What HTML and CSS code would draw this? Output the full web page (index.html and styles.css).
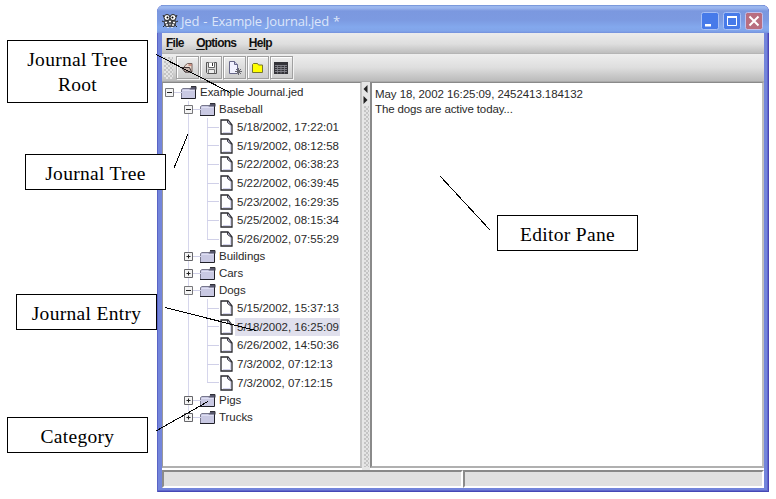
FILE: index.html
```
<!DOCTYPE html>
<html lang="en">
<head>
<meta charset="utf-8">
<title>Jed - Example Journal.jed</title>
<link rel="stylesheet" href="styles.css">
</head>
<body>
<svg class="defs" width="0" height="0">
  <defs>
    <symbol id="folder" viewBox="0 0 16 13"><path d="M1 3h13v9H1z" fill="#c9c9e3"/><path d="M.5 12V3.500L2 2.500h7.500" fill="none" stroke="#77778c"/><path d="M0 12.500H14.500V3" fill="none" stroke="#202028"/><path d="M8.500 3.500L10.500.500H15v3z" fill="#55556a"/><path d="M10 .5h5v3" fill="none" stroke="#303038"/><path d="M1.500 4.500h12" stroke="#dedef2"/></symbol>
    <symbol id="doc" viewBox="0 0 13 16"><path d="M1 1h7l4 5v9H1z" fill="#fff" stroke="#28282e" stroke-width="1.300"/><path d="M3 13.500h7.500V6.500" fill="none" stroke="#d5d5ee"/><path d="M7.500 1v2.500l4 3" fill="#c9c9e6" stroke="#38383e"/></symbol>
    <symbol id="minus" viewBox="0 0 9 9"><path d="M.5.5h8v8h-8z" fill="#f4f4f4" stroke="#77777a"/><path d="M2 4.500h5" stroke="#222"/></symbol>
    <symbol id="plus" viewBox="0 0 9 9"><path d="M.5.5h8v8h-8z" fill="#f4f4f4" stroke="#66666a"/><path d="M2.500 4.500h4M4.500 2.500v4" stroke="#222"/></symbol>
  </defs>
</svg>

<main class="window">
  <header class="titlebar">
    <svg class="app-icon" width="16" height="16" viewBox="0 0 16 16"><path d="M2 4l-1-2M14 4l1-2M2 9L0 8M14 9l2-1M3 12l-2 2M13 12l2 2" stroke="#222"/><rect x="2" y="6" width="12" height="8" rx="3" fill="#44464c"/><circle cx="5" cy="4.500" r="3" fill="#fff" stroke="#222"/><circle cx="11" cy="4.500" r="3" fill="#fff" stroke="#222"/><circle cx="5.500" cy="4.500" r="1"/><circle cx="10.500" cy="4.500" r="1"/><path d="M3 9.500h2M7 8.500h2M11 9.500h2M4 12h2M7.500 11.500h1M10 12h2M6 14v1M10 14v1" stroke="#fff" stroke-width="1.300"/></svg>
    <h1 class="title">Jed - Example Journal.jed *</h1>
    <div class="controls">
      <svg width="18" height="18" viewBox="0 0 18 18"><rect x=".5" y=".5" width="17" height="17" rx="2" class="btn-blue"/><path d="M4 12h6v2.500H4z" fill="#fff"/></svg>
      <svg width="18" height="18" viewBox="0 0 18 18"><rect x=".5" y=".5" width="17" height="17" rx="2" class="btn-blue"/><path d="M4.500 5v8.500h9V5z" fill="none" stroke="#fff"/><path d="M4 5h10" stroke="#fff" stroke-width="2"/></svg>
      <svg width="18" height="18" viewBox="0 0 18 18"><rect x=".5" y=".5" width="17" height="17" rx="2" class="btn-red"/><path d="M4.500 4.500l9 9m0-9l-9 9" stroke="#fff" stroke-width="2"/></svg>
    </div>
  </header>
  <nav class="menubar"><span><u>F</u>ile</span><span><u>O</u>ptions</span><span><u>H</u>elp</span></nav>
  <div class="toolbar">
    <i class="grip"></i>
    <button class="tool"><svg width="16" height="16" viewBox="0 0 16 16"><path d="M5.500 6l3-2.500h4.500v8.500H6z" fill="#e8d9cf" stroke="#77625c"/><path d="M2.500 7.500h8l2 4.500H6z" fill="#c5b3ab" stroke="#44383a"/><path d="M9.500 5h3" stroke="#b64a38"/></svg></button>
    <button class="tool"><svg width="16" height="16" viewBox="0 0 16 16"><path d="M3.500 2.500h10v11h-9l-1-1z" fill="#dcdcdc" stroke="#555"/><path d="M5.500 2.500v5h6v-5" fill="#fff" stroke="#666"/><path d="M9.500 3v3" stroke="#333"/><path d="M5.500 13v-3.500h6V13" fill="#eee" stroke="#777"/></svg></button>
    <button class="tool"><svg width="16" height="16" viewBox="0 0 16 16"><path d="M3.500 1.500h5l3 3v9h-8z" fill="#f2f2ff" stroke="#666688"/><path d="M8.500 1.500v3h3" fill="#c8c8e4" stroke="#666688"/><path d="M12.500 8v7M9 11.500h7M10 9l5 5m0-5l-5 5" stroke="#66666f"/></svg></button>
    <button class="tool"><svg width="16" height="16" viewBox="0 0 16 16"><path d="M2.500 4.500l1-1h4l1 1.500h4v7.500h-10z" fill="#ff0" stroke="#77772c"/></svg></button>
    <button class="tool"><svg width="16" height="16" viewBox="0 0 16 16"><path d="M1 2h14v12H1z" fill="#333338"/><path d="M2 5.500h12M2 7.500h12M2 9.500h12M2 11.500h12" stroke="#92929a" stroke-width=".8"/><path d="M4.500 5v8.500M8 5v8.500M11.500 5v8.500" stroke="#85858d" stroke-width=".8"/></svg></button>
  </div>
  <div class="split">
    <section class="tree">
      <div class="row root"><svg class="exp"><use href="#minus"/></svg><svg class="folder"><use href="#folder"/></svg><span>Example Journal.jed</span></div>
      <ul class="categories">
        <li><div class="row"><svg class="exp"><use href="#minus"/></svg><svg class="folder"><use href="#folder"/></svg><span>Baseball</span></div>
          <ul class="entries">
            <li><svg class="doc"><use href="#doc"/></svg><span>5/18/2002, 17:22:01</span></li>
            <li><svg class="doc"><use href="#doc"/></svg><span>5/19/2002, 08:12:58</span></li>
            <li><svg class="doc"><use href="#doc"/></svg><span>5/22/2002, 06:38:23</span></li>
            <li><svg class="doc"><use href="#doc"/></svg><span>5/22/2002, 06:39:45</span></li>
            <li><svg class="doc"><use href="#doc"/></svg><span>5/23/2002, 16:29:35</span></li>
            <li><svg class="doc"><use href="#doc"/></svg><span>5/25/2002, 08:15:34</span></li>
            <li><svg class="doc"><use href="#doc"/></svg><span>5/26/2002, 07:55:29</span></li>
          </ul></li>
        <li><div class="row"><svg class="exp"><use href="#plus"/></svg><svg class="folder"><use href="#folder"/></svg><span>Buildings</span></div></li>
        <li><div class="row"><svg class="exp"><use href="#plus"/></svg><svg class="folder"><use href="#folder"/></svg><span>Cars</span></div></li>
        <li><div class="row"><svg class="exp"><use href="#minus"/></svg><svg class="folder"><use href="#folder"/></svg><span>Dogs</span></div>
          <ul class="entries">
            <li><svg class="doc"><use href="#doc"/></svg><span>5/15/2002, 15:37:13</span></li>
            <li><svg class="doc"><use href="#doc"/></svg><span class="selected">5/18/2002, 16:25:09</span></li>
            <li><svg class="doc"><use href="#doc"/></svg><span>6/26/2002, 14:50:36</span></li>
            <li><svg class="doc"><use href="#doc"/></svg><span>7/3/2002, 07:12:13</span></li>
            <li><svg class="doc"><use href="#doc"/></svg><span>7/3/2002, 07:12:15</span></li>
          </ul></li>
        <li><div class="row"><svg class="exp"><use href="#plus"/></svg><svg class="folder"><use href="#folder"/></svg><span>Pigs</span></div></li>
        <li><div class="row"><svg class="exp"><use href="#plus"/></svg><svg class="folder"><use href="#folder"/></svg><span>Trucks</span></div></li>
      </ul>
    </section>
    <div class="divider">
      <svg width="9" height="24" viewBox="0 0 9 24"><path d="M5.500 3v8L1.500 7zM1.500 14v8l4-4z" fill="#222"/></svg>
      <i class="grip"></i>
    </div>
    <section class="editor"><p class="stamp">May 18, 2002 16:25:09, 2452413.184132</p><p>The dogs are active today...</p></section>
  </div>
  <footer class="status"><div></div><div></div></footer>
</main>

<div class="callout c-root">Journal Tree<br>Root</div>
<div class="callout c-tree">Journal Tree</div>
<div class="callout c-entry">Journal Entry</div>
<div class="callout c-category">Category</div>
<div class="callout c-editor">Editor Pane</div>
<svg class="pointers" width="776" height="499" viewBox="0 0 776 499"><path d="M156 54.500L230 92.500M188 134L174 168M165 307.500L256 330.500M156 431L208 401.500M440 176L490 230"/></svg>
</body>
</html>
```

FILE: styles.css
```
* { box-sizing: border-box; }
body { margin: 0; width: 776px; height: 499px; padding: 5px 0 0 157px; overflow: hidden; background: #fff; position: relative; font: 11.500px/15px "Liberation Sans", sans-serif; color: #2a2a2a; }
ul, p, h1 { margin: 0; padding: 0; }
ul { list-style: none; }
svg { display: block; flex: none; }
.defs { position: absolute; }

.window { width: 612px; height: 487px; display: flex; flex-direction: column; padding: 0 5px 4px; border-radius: 7px 7px 0 0; background: #7385db; box-shadow: inset 1px 0 #5963c5, inset -1px 0 #4a45b5, inset 0 -1px #4648b5, inset -2px -2px #6068cc; }
.titlebar { height: 28px; flex: none; margin: 0 -5px; padding: 0 6px 0 5px; display: flex; align-items: center; border-radius: 7px 7px 0 0; background: linear-gradient(#5c7cc8 0, #9ab7ef 1px, #9ab5ee 3px, #7b98df 6px, #7c9ae1 15px, #83a8ed 22px, #81a5ea 26px, #7590dc 28px); }
.app-icon { margin-top: 3px; }
.title { margin: 4px 0 0 3px; font: 500 13px/16px "Open Sans", sans-serif; letter-spacing: -.2px; word-spacing: 1px; color: #dce6fa; white-space: nowrap; }
.controls { display: flex; gap: 4px; margin: 3px 0 0 auto; }
.btn-blue { fill: #477ae9; stroke: #a9c0f5; }
.btn-red { fill: #b96e80; stroke: #bfc0ee; }

.menubar { height: 21px; flex: none; padding: 3px 4px; display: flex; gap: 12.500px; background: linear-gradient(#ececec, #dedede 55%, #bebebe); font-size: 12px; font-weight: bold; letter-spacing: -.75px; color: #111; border-bottom: 1px solid #b5b5b5; }
.menubar u { text-underline-offset: 2px; }
.toolbar { height: 28px; flex: none; display: flex; align-items: center; padding: 0 2px; background: linear-gradient(#eee, #dedede 50%, #bbb); border-bottom: 1px solid #aaa; }
.grip { display: block; width: 9px; background-color: #e4e4e4; background-image: radial-gradient(circle at 1px 1px, #b9b9b9 0 .6px, transparent 1px), radial-gradient(circle at 3px 3px, #b9b9b9 0 .6px, transparent 1px); background-size: 4px 4px; }
.toolbar .grip { height: 22px; margin-right: 3px; }
.tool { width: 22.500px; height: 23px; flex: none; margin-right: 1px; padding: 0; display: flex; align-items: center; justify-content: center; background: linear-gradient(#ededed, #ccc); border: 1px solid #a0a0a0; box-shadow: inset 1px 1px #fff, 1px 1px #f3f3f3; }

.split { height: 388px; flex: none; display: flex; background: #fff; }
.tree { width: 200px; border: 1px solid #888; border-left-color: #999; border-right: 2px solid #c4c4c4; border-bottom: 2px solid #b0b0b0; margin-bottom: 2px; padding: 1px 0 0 2px; background: #fff; }
.row { height: 16.800px; display: flex; align-items: center; position: relative; white-space: nowrap; }
.row::before { content: ""; position: absolute; left: 9px; top: 8px; width: 8px; height: 1px; background: #d0d0e8; }
.exp { width: 9px; height: 9px; }
.folder { width: 16px; height: 13px; margin: 0 3px 0 7px; }
.row span { letter-spacing: -.04px; }
.categories { position: relative; margin-left: 19px; }
.categories::before { content: ""; position: absolute; left: 4px; top: 0; height: 310px; width: 1px; background: #d6d6ec; }
.categories .exp { position: relative; }
.entries { position: relative; margin-left: 23px; }
.entries::before { content: ""; position: absolute; left: 0; top: 0; bottom: 9px; width: 1px; background: #d6d6ec; }
.entries li { height: 18.670px; display: flex; align-items: center; position: relative; letter-spacing: -.02px; white-space: nowrap; }
.entries li::before { content: ""; position: absolute; left: 0; top: 9px; width: 12px; height: 1px; background: #d0d0e8; }
.doc { width: 13px; height: 16px; margin: 0 2px 0 13px; }
.entries span { padding: 2px 1px 1px 2px; }
.entries .selected { background: #e0e0ed; }

.divider { width: 8px; display: flex; flex-direction: column; background: #e6e6e6; }
.divider .grip { flex: 1; width: 5px; margin: 0 1px 3px 2px; }
.editor { flex: 1; margin-bottom: 2px; padding: 4px 3px; border: 2px solid #8a8a8a; border-top-width: 1px; border-right-color: #bdbdbd; border-bottom-color: #b0b0b0; background: #fff; white-space: nowrap; }
.stamp { letter-spacing: -.07px; }
.editor p + p { letter-spacing: -.12px; }
.status { height: 18px; flex: none; display: grid; grid-template-columns: 301px 1fr; background: #e0e0e0; }
.status div { border: 2px solid #fff; border-top-color: #888; border-left-color: #8b8b8b; }

.callout { position: absolute; width: 141px; height: 36px; display: flex; align-items: center; justify-content: center; padding-top: 2px; border: 1px solid #000; background: #fff; color: #000; text-align: center; font: 19.500px/25px "Liberation Serif", serif; letter-spacing: .3px; }
.c-root { left: 7px; top: 40px; height: 63px; display: block; padding-top: 6px; }
.c-tree { left: 25px; top: 154px; }
.c-entry { left: 16px; top: 294px; }
.c-category { left: 7px; top: 417px; }
.c-editor { left: 497px; top: 215px; }
.pointers { position: absolute; left: 0; top: 0; fill: none; stroke: #000; stroke-width: 1; shape-rendering: crispEdges; }
```
